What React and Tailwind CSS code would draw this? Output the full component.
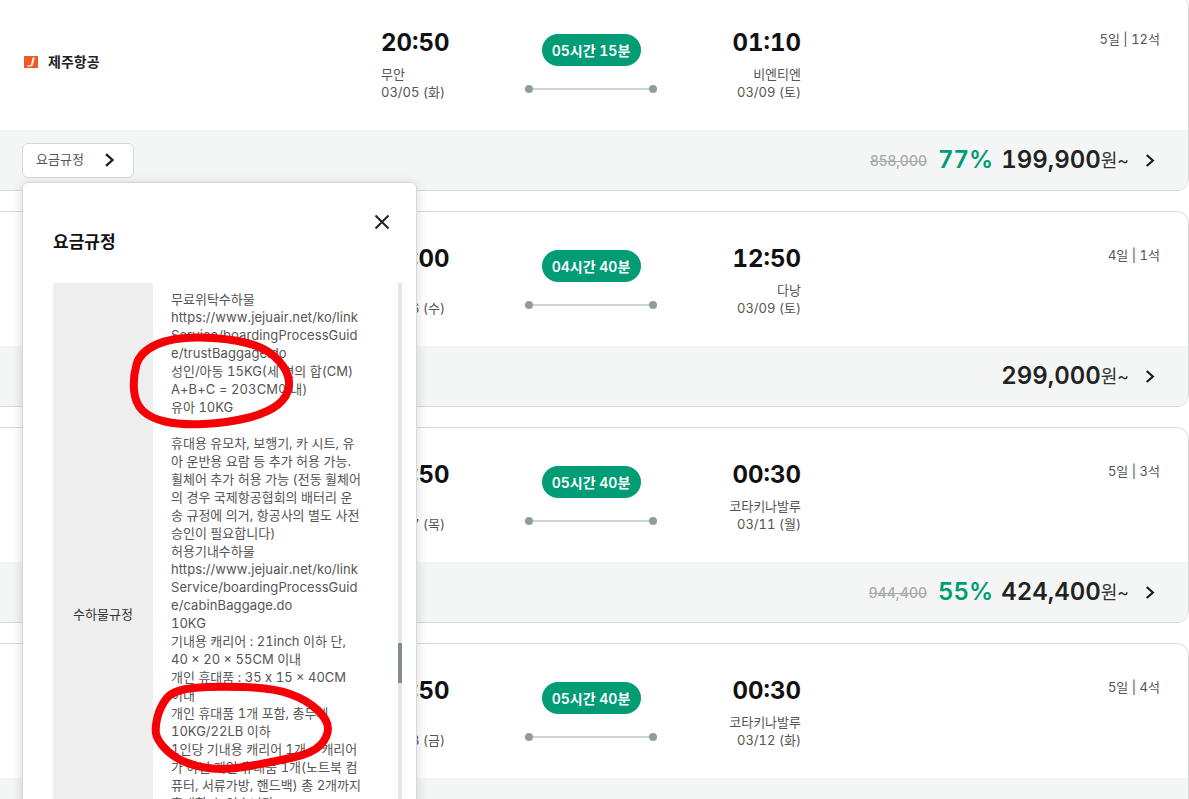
import React from "react";

const font = { fontFamily: '"Inter","Noto Sans CJK KR","Noto Sans",sans-serif' };

const flights = [
  { dep: "20:50", depDate: "03/05 (화)", dur: "05시간 15분", arr: "01:10", city: "비엔티엔", arrDate: "03/09 (토)", seats: "5일 | 12석", old: "858,000", pct: "77%", price: "199,900" },
  { dep: "08:00", depDate: "03/06 (수)", dur: "04시간 40분", arr: "12:50", city: "다낭", arrDate: "03/09 (토)", seats: "4일 | 1석", price: "299,000" },
  { dep: "20:50", depDate: "03/07 (목)", dur: "05시간 40분", arr: "00:30", city: "코타키나발루", arrDate: "03/11 (월)", seats: "5일 | 3석", old: "944,400", pct: "55%", price: "424,400" },
  { dep: "20:50", depDate: "03/08 (금)", dur: "05시간 40분", arr: "00:30", city: "코타키나발루", arrDate: "03/12 (화)", seats: "5일 | 4석" },
];

const lines = [
  ["무료위탁수하물"],
  ["https://www.jejuair.net/ko/link", true],
  ["Service/boardingProcessGuid", true],
  ["e/trustBaggage.do", true],
  ["성인/아동 15KG(세 변의 합(CM)"],
  ["A+B+C = 203CM이내)", true],
  ["유아 10KG"],
  ["\u00a0"],
  ["휴대용 유모차, 보행기, 카 시트, 유"],
  ["아 운반용 요람 등 추가 허용 가능."],
  ["휠체어 추가 허용 가능 (전동 휠체어"],
  ["의 경우 국제항공협회의 배터리 운"],
  ["송 규정에 의거, 항공사의 별도 사전"],
  ["승인이 필요합니다)"],
  ["허용기내수하물"],
  ["https://www.jejuair.net/ko/link", true],
  ["Service/boardingProcessGuid", true],
  ["e/cabinBaggage.do", true],
  ["10KG"],
  ["기내용 캐리어 : 21inch 이하 단,"],
  ["40 x 20 × 55CM 이내"],
  ["개인 휴대품 : 35 x 15 × 40CM"],
  ["이내"],
  ["개인 휴대품 1개 포함, 총무게"],
  ["10KG/22LB 이하"],
  ["1인당 기내용 캐리어 1개 + 캐리어"],
  ["가 아닌 개인 휴대품 1개(노트북 컴"],
  ["퓨터, 서류가방, 핸드백) 총 2개까지"],
  ["휴대할 수 있습니다"],
];

function Chevron({ className }) {
  return (
    <svg viewBox="0 0 12 14" className={className} fill="none" stroke="#1c1c1c" strokeWidth="2">
      <path d="M2.5 1.8 8.2 7l-5.7 5.2" />
    </svg>
  );
}

function Logo() {
  return (
    <svg viewBox="0 0 14 12" className="w-[14px] h-[12px] shrink-0">
      <rect width="14" height="12" fill="#f15a24" />
      <path d="M8.6 1.6h2.2L9 8.8C8.7 10 7.8 10.5 6.6 10.5H3.2l.3-1.2h2.3c.7 0 1-.3 1.2-.9z" fill="#fff" opacity="0.9" />
    </svg>
  );
}

function smooth(p) {
  const mid = (a, b) => [(a[0] + b[0]) / 2, (a[1] + b[1]) / 2];
  const s = mid(p[p.length - 1], p[0]);
  let d = `M${s[0]} ${s[1]}`;
  p.forEach((pt, i) => {
    const m = mid(pt, p[(i + 1) % p.length]);
    d += ` Q${pt[0]} ${pt[1]} ${m[0]} ${m[1]}`;
  });
  return d;
}

const ring1 = [[140,352],[173,337],[227,338],[267,348],[290,373],[288,397],[267,413],[227,423],[180,425],[150,418],[135,403],[133,377]];
const ring2 = [[173,690],[213,686],[273,688],[307,700],[328,720],[328,737],[313,753],[273,762],[227,770],[197,767],[173,757],[157,740],[155,727],[160,707]];

function Card({ f, first }) {
  return (
    <div className="h-[196px] rounded-xl border border-[#d5dad9] overflow-hidden bg-white flex flex-col shrink-0">
      <div className="h-[134px] flex items-start shrink-0">
        <div className="w-[392px] h-full pl-[35px] flex items-center gap-[10px] pb-[3px]">
          {first && <Logo />}
          {first && <span className="text-[14px] font-semibold text-[#222]">제주항공</span>}
        </div>
        <div className="w-[144px] pt-[30px]">
          <div className="text-[24px] leading-[34px] font-bold text-[#111] tabular-nums">{f.dep}</div>
          <div className="mt-[5px] text-[13px] leading-[18px] text-[#555]">무안</div>
          <div className="text-[13px] leading-[18px] text-[#555] tabular-nums">{f.depDate}</div>
        </div>
        <div className="w-[132px] pt-[38px] flex flex-col items-center">
          <div className="w-[99px] h-[32px] rounded-full bg-[#009c75] text-white text-[14px] font-semibold flex items-center justify-center tabular-nums">{f.dur}</div>
          <div className="mt-[19px] w-full flex items-center">
            <span className="w-[8px] h-[8px] rounded-full bg-[#8f9c98] shrink-0" />
            <span className="h-[2px] flex-1 bg-[#cdd4d2]" />
            <span className="w-[8px] h-[8px] rounded-full bg-[#8f9c98] shrink-0" />
          </div>
        </div>
        <div className="w-[144px] pt-[30px] text-right">
          <div className="text-[24px] leading-[34px] font-bold text-[#111] tabular-nums">{f.arr}</div>
          <div className="mt-[5px] text-[13px] leading-[18px] text-[#555]">{f.city}</div>
          <div className="text-[13px] leading-[18px] text-[#555] tabular-nums">{f.arrDate}</div>
        </div>
        <div className="flex-1 pt-[34px] pr-[28px] text-right text-[13px] leading-[18px] text-[#555] tabular-nums">{f.seats}</div>
      </div>
      <div className="h-[60px] bg-[#f4f6f6] flex items-center justify-between pl-[33px] pr-[31px] shrink-0">
        {first ? (
          <div className="w-[112px] h-[35px] rounded-md border border-[#d5dad9] bg-white flex items-center pl-[13px] gap-[19px]">
            <span className="text-[13px] text-[#555]">요금규정</span>
            <Chevron className="w-[14px] h-[16px]" />
          </div>
        ) : <span />}
        {f.price && (
          <div className="flex items-center tabular-nums">
            {f.old && <span className="text-[14px] font-medium text-[#aaa] line-through mr-[11px] [font-variant-numeric:normal]">{f.old}</span>}
            {f.pct && <span className="text-[24px] font-semibold text-[#009c75] mr-[8px]">{f.pct}</span>}
            <span className="text-[24px] font-semibold text-[#222]">{f.price}</span>
            <span className="text-[18px] text-[#333]">원~</span>
            <Chevron className="w-[13px] h-[15px] ml-[15px]" />
          </div>
        )}
      </div>
    </div>
  );
}

export default function App() {
  return (
    <div className="relative w-[1189px] h-[799px] overflow-hidden bg-white" style={font}>
      <div className="w-[1201px] -ml-3 -mt-[5px] flex flex-col gap-5">
        {flights.map((f, i) => (
          <Card key={i} f={f} first={i === 0} />
        ))}
      </div>

      <div className="absolute left-[22px] top-[182px] w-[395px] h-[700px] rounded-md bg-white border border-[#d5dad9] shadow-[0_2px_12px_rgba(0,0,0,0.16)]">
        <div className="flex items-start justify-between pl-[30px] pr-[26px] h-[100px]">
          <h2 className="mt-[47px] text-[17px] leading-[24px] font-bold text-[#111]">요금규정</h2>
          <svg viewBox="0 0 16 16" className="w-4 h-4 mt-[31px]" fill="none" stroke="#222" strokeWidth="2">
            <path d="M1.5 1.5l13 13M14.5 1.5l-13 13" />
          </svg>
        </div>
        <div className="flex ml-[30px]">
          <div className="w-[100px] h-[664px] bg-[#eeeeee] flex items-center justify-center text-[13px] text-[#333]">수하물규정</div>
          <div className="w-[245px] pl-[18px] pt-[7px] text-[13px] leading-[18px] text-[#555] whitespace-nowrap tabular-nums">
            {lines.map(([l, latin], i) => (
              <div key={i} className={latin ? "tracking-[0.1px]" : ""}>{l}</div>
            ))}
          </div>
          <div className="w-[4px] h-[664px] bg-[#e5e5e5]">
            <div className="mt-[360px] h-[40px] bg-[#7f8f8a]" />
          </div>
        </div>
      </div>

      <svg className="absolute inset-0 pointer-events-none" width="1189" height="799" fill="none" stroke="#f50007" strokeWidth="8" strokeLinejoin="round">
        <path d={smooth(ring1)} />
        <path d={smooth(ring2)} />
      </svg>
    </div>
  );
}
